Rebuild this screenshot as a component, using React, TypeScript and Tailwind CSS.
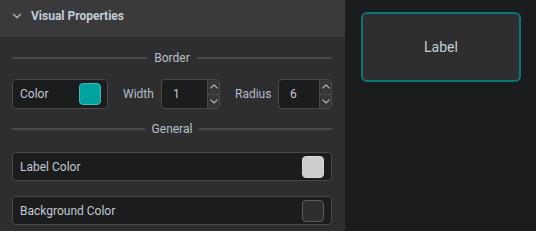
import React from "react";

const font = { fontFamily: "Roboto, 'Noto Sans', sans-serif" };

function Chevron({ up, size = 8 }: { up?: boolean; size?: number }) {
  return (
    <svg width={size} height={size * 0.6} viewBox="0 0 10 6" fill="none">
      <path
        d={up ? "M1 5 L5 1 L9 5" : "M1 1 L5 5 L9 1"}
        stroke="#a9b8cc"
        strokeWidth="1.4"
        strokeLinecap="round"
        strokeLinejoin="round"
      />
    </svg>
  );
}

function Divider({ label }: { label: string }) {
  return (
    <div className="flex h-[14px] items-center gap-[7px]">
      <div className="h-[2px] flex-1 bg-[#49494c]" />
      <span className="text-[12px] leading-[14px] text-[#b9c0ca]">{label}</span>
      <div className="h-[2px] flex-1 bg-[#49494c]" />
    </div>
  );
}

function NumberField({ value, width }: { value: string; width: string }) {
  return (
    <div className="flex h-[30px] shrink-0">
      <div
        className={`${width} flex shrink-0 items-center rounded-l-[4px] border border-r-0 border-[#4a4a4d] bg-[#1b1c1e] pl-[11px] text-[12px] text-[#c3c9d2]`}
      >
        {value}
      </div>
      <div className="flex w-[13px] shrink-0 flex-col overflow-hidden rounded-r-[4px] border border-[#4a4a4d] bg-[#353537]">
        <div className="flex flex-1 items-center justify-center border-b border-[#4a4a4d]">
          <Chevron up />
        </div>
        <div className="flex flex-1 items-center justify-center">
          <Chevron />
        </div>
      </div>
    </div>
  );
}

function ColorRow({ label, swatch }: { label: string; swatch: string }) {
  return (
    <div className="flex h-[29px] items-center justify-between rounded-[4px] border border-[#49494c] bg-[#1b1c1e] pl-[7px] pr-[7px]">
      <span className="text-[12px] text-[#c3c9d2]">{label}</span>
      <div className={`h-[22px] w-[22px] rounded-[4px] border ${swatch}`} />
    </div>
  );
}

export default function App() {
  return (
    <div className="flex h-[231px] w-[536px] overflow-hidden bg-[#1b1c1e]" style={font}>
      <div className="flex w-[345px] shrink-0 flex-col bg-[#2e2e30]">
        <div className="flex h-[37px] items-center gap-[7px] bg-[#3a3a3c] pb-[6px] pl-[10px]">
          <svg width="14" height="14" viewBox="0 0 24 24" fill="none">
            <path d="m6 9 6 6 6-6" stroke="#b4bfcf" strokeWidth="2" strokeLinecap="round" strokeLinejoin="round" />
          </svg>
          <span className="text-[12px] font-bold text-[#c4ccd7]">Visual Properties</span>
        </div>
        <div className="flex flex-col pl-[12px] pr-[13px] pt-[14px]">
          <Divider label="Border" />
          <div className="mt-[14px] flex h-[30px] items-center">
            <div className="flex h-[30px] w-[96px] shrink-0 items-center justify-between rounded-[4px] border border-[#4a4a4d] bg-[#1b1c1e] pl-[7px] pr-[6px]">
              <span className="text-[12px] text-[#c3c9d2]">Color</span>
              <div className="h-[22px] w-[22px] shrink-0 rounded-[4px] border border-[#3fbaba] bg-[#00a2a2]" />
            </div>
            <span className="ml-[15px] w-[30px] shrink-0 text-[12px] text-[#b3bcc8]">Width</span>
            <div className="ml-[8px] shrink-0">
              <NumberField value="1" width="w-[46px]" />
            </div>
            <span className="ml-[15px] w-[35px] shrink-0 text-[12px] text-[#b3bcc8]">Radius</span>
            <div className="ml-[8px] shrink-0">
              <NumberField value="6" width="w-[41px]" />
            </div>
          </div>
          <div className="mt-[13px]">
            <Divider label="General" />
          </div>
          <div className="mt-[16px]">
            <ColorRow label="Label Color" swatch="border-[#d8d8d8] bg-[#cccccc]" />
          </div>
          <div className="mt-[15px]">
            <ColorRow label="Background Color" swatch="border-[#5c5c5f] bg-[#2e2e30]" />
          </div>
        </div>
      </div>
      <div className="flex-1 pl-[16px] pt-[12px]">
        <div className="flex h-[70px] w-[160px] items-center justify-center rounded-[6px] border-2 border-[#0c7575] bg-[#2e2e30]">
          <span className="text-[14px] text-[#c8cdd5]">Label</span>
        </div>
      </div>
    </div>
  );
}
